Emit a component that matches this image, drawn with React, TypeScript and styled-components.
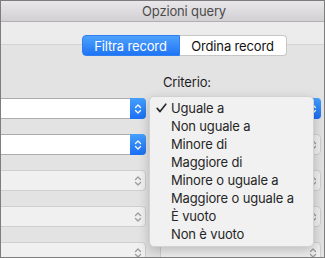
import React from 'react';
import styled, {createGlobalStyle} from 'styled-components';

const GlobalStyle = createGlobalStyle`
html, body {
  margin: 0;
  padding: 0;
  background: #e3e3e3;
}
body {
  font-family: 'Inter', 'Helvetica Neue', 'Liberation Sans', Arial, sans-serif;
  letter-spacing: -0.15px;
  -webkit-font-smoothing: antialiased;
}
`;

const Window = styled.div`
width: 325px;
height: 258px;
box-sizing: border-box;
border: 1px solid #7d7d7d;
overflow: hidden;
display: flex;
flex-direction: column;
background: #e3e3e3;
`;

const TitleBar = styled.div`
flex: none;
height: 20px;
display: flex;
align-items: center;
justify-content: center;
padding-left: 43px;
background: linear-gradient(#e9e7e9, #d2d0d2);
border-bottom: 1px solid #b1b1b1;
font-size: 13px;
color: #4b4b4b;
`;

const Toolbar = styled.div`
flex: none;
height: 22px;
display: flex;
align-items: flex-end;
justify-content: center;
padding-left: 43px;
background: #ececec;
border-bottom: 1px solid #d3d3d3;
`;

const Segmented = styled.div`
position: relative;
z-index: 1;
display: flex;
margin-bottom: -12px;
`;

interface SegmentProps {
    $active?: boolean;
}

const Segment = styled.div<SegmentProps>`
height: 21px;
box-sizing: border-box;
display: flex;
align-items: center;
justify-content: center;
font-size: 13px;
width: ${p => (p.$active ? '98px' : '107px')};
color: ${p => (p.$active ? '#ffffff' : '#111111')};
background: ${p => (p.$active ? 'linear-gradient(#4fa2fd, #1f74f4)' : '#ffffff')};
border: 1px solid ${p => (p.$active ? '#2f7ff2' : '#c6c6c6')};
border-left: ${p => (p.$active ? '1px solid #2f7ff2' : 'none')};
border-radius: ${p => (p.$active ? '4px 0 0 4px' : '0 4px 4px 0')};
`;

const Content = styled.div`
flex: 1;
display: flex;
flex-direction: column;
padding: 29px 3px 0 0;
`;

const Columns = styled.div`
display: grid;
grid-template-columns: 145px 1fr;
column-gap: 14px;
`;

const LabelRow = styled(Columns)`
height: 16px;
margin-bottom: 8px;
`;

const Label = styled.span`
grid-column: 2;
padding-left: 3px;
font-size: 13px;
line-height: 16px;
color: #1d1d1d;
`;

const Rows = styled(Columns)`
row-gap: 15px;
grid-auto-rows: 21px;
`;

const Cell = styled.div`
position: relative;
`;

interface SelectProps {
    $disabled?: boolean;
    $bleed?: boolean;
}

const Select = styled.div<SelectProps>`
height: 21px;
box-sizing: border-box;
display: flex;
justify-content: flex-end;
margin-left: ${p => (p.$bleed ? '-10px' : '0')};
background: ${p => (p.$disabled ? '#f0f0f0' : '#ffffff')};
border: 1px solid ${p => (p.$disabled ? '#cfcfcf' : '#acacac')};
border-radius: 4px;
`;

const Stepper = styled.div<SelectProps>`
width: 16px;
margin: -1px -1px -1px 0;
display: flex;
align-items: center;
justify-content: center;
border-radius: 0 4px 4px 0;
background: ${p => (p.$disabled ? 'transparent' : 'linear-gradient(#45a0fd, #1a6ff4)')};
color: ${p => (p.$disabled ? '#9c9c9c' : '#ffffff')};
`;

const Menu = styled.ul`
position: absolute;
z-index: 5;
top: -2px;
left: -11px;
width: 165px;
box-sizing: border-box;
margin: 0;
padding: 2px 0 3px 0;
list-style: none;
background: #f1f1f1;
border: 1px solid #d2d2d2;
border-radius: 5px;
box-shadow: 0 4px 12px rgba(0, 0, 0, 0.22);
`;

const MenuItem = styled.li`
position: relative;
height: 18px;
line-height: 18px;
padding-left: 21px;
font-size: 13px;
color: #262626;
white-space: nowrap;
`;

const Check = styled.svg`
position: absolute;
left: 6px;
top: 4px;
`;

const Chevrons = () => (
    <svg width="8" height="12" viewBox="0 0 8 12" fill="none" stroke="currentColor" strokeWidth="1.3" strokeLinecap="round" strokeLinejoin="round">
        <path d="M1.5 4.5 L4 2 L6.5 4.5" />
        <path d="M1.5 7.5 L4 10 L6.5 7.5" />
    </svg>
);

const PopupSelect = ({disabled, bleed}: {disabled?: boolean; bleed?: boolean}) => (
    <Select $disabled={disabled} $bleed={bleed}>
        <Stepper $disabled={disabled}>
            <Chevrons />
        </Stepper>
    </Select>
);

const options = [
    'Uguale a',
    'Non uguale a',
    'Minore di',
    'Maggiore di',
    'Minore o uguale a',
    'Maggiore o uguale a',
    'È vuoto',
    'Non è vuoto',
];

const rows = [
    {left: true, right: true},
    {left: true, right: false},
    {left: false, right: false},
    {left: false, right: false},
    {left: false, right: false},
];

const App = () => {
    return (
        <>
        <GlobalStyle />
        <Window>
            <TitleBar>Opzioni query</TitleBar>
            <Toolbar>
                <Segmented>
                    <Segment $active>Filtra record</Segment>
                    <Segment>Ordina record</Segment>
                </Segmented>
            </Toolbar>
            <Content>
                <LabelRow>
                    <Label>Criterio:</Label>
                </LabelRow>
                <Rows>
                    {rows.map((row, i) => (
                        <React.Fragment key={i}>
                            <Cell>
                                <PopupSelect bleed disabled={!row.left} />
                            </Cell>
                            <Cell>
                                <PopupSelect disabled={!row.right} />
                                {i === 0 && (
                                    <Menu>
                                        {options.map((opt, j) => (
                                            <MenuItem key={opt}>
                                                {j === 0 && (
                                                    <Check width="11" height="10" viewBox="0 0 11 10" fill="none" stroke="#262626" strokeWidth="1.6" strokeLinecap="round" strokeLinejoin="round">
                                                        <path d="M1.2 5.4 L4 8.6 L9.8 1.2" />
                                                    </Check>
                                                )}
                                                {opt}
                                            </MenuItem>
                                        ))}
                                    </Menu>
                                )}
                            </Cell>
                        </React.Fragment>
                    ))}
                </Rows>
            </Content>
        </Window>
        </>
    )
}

export default App
